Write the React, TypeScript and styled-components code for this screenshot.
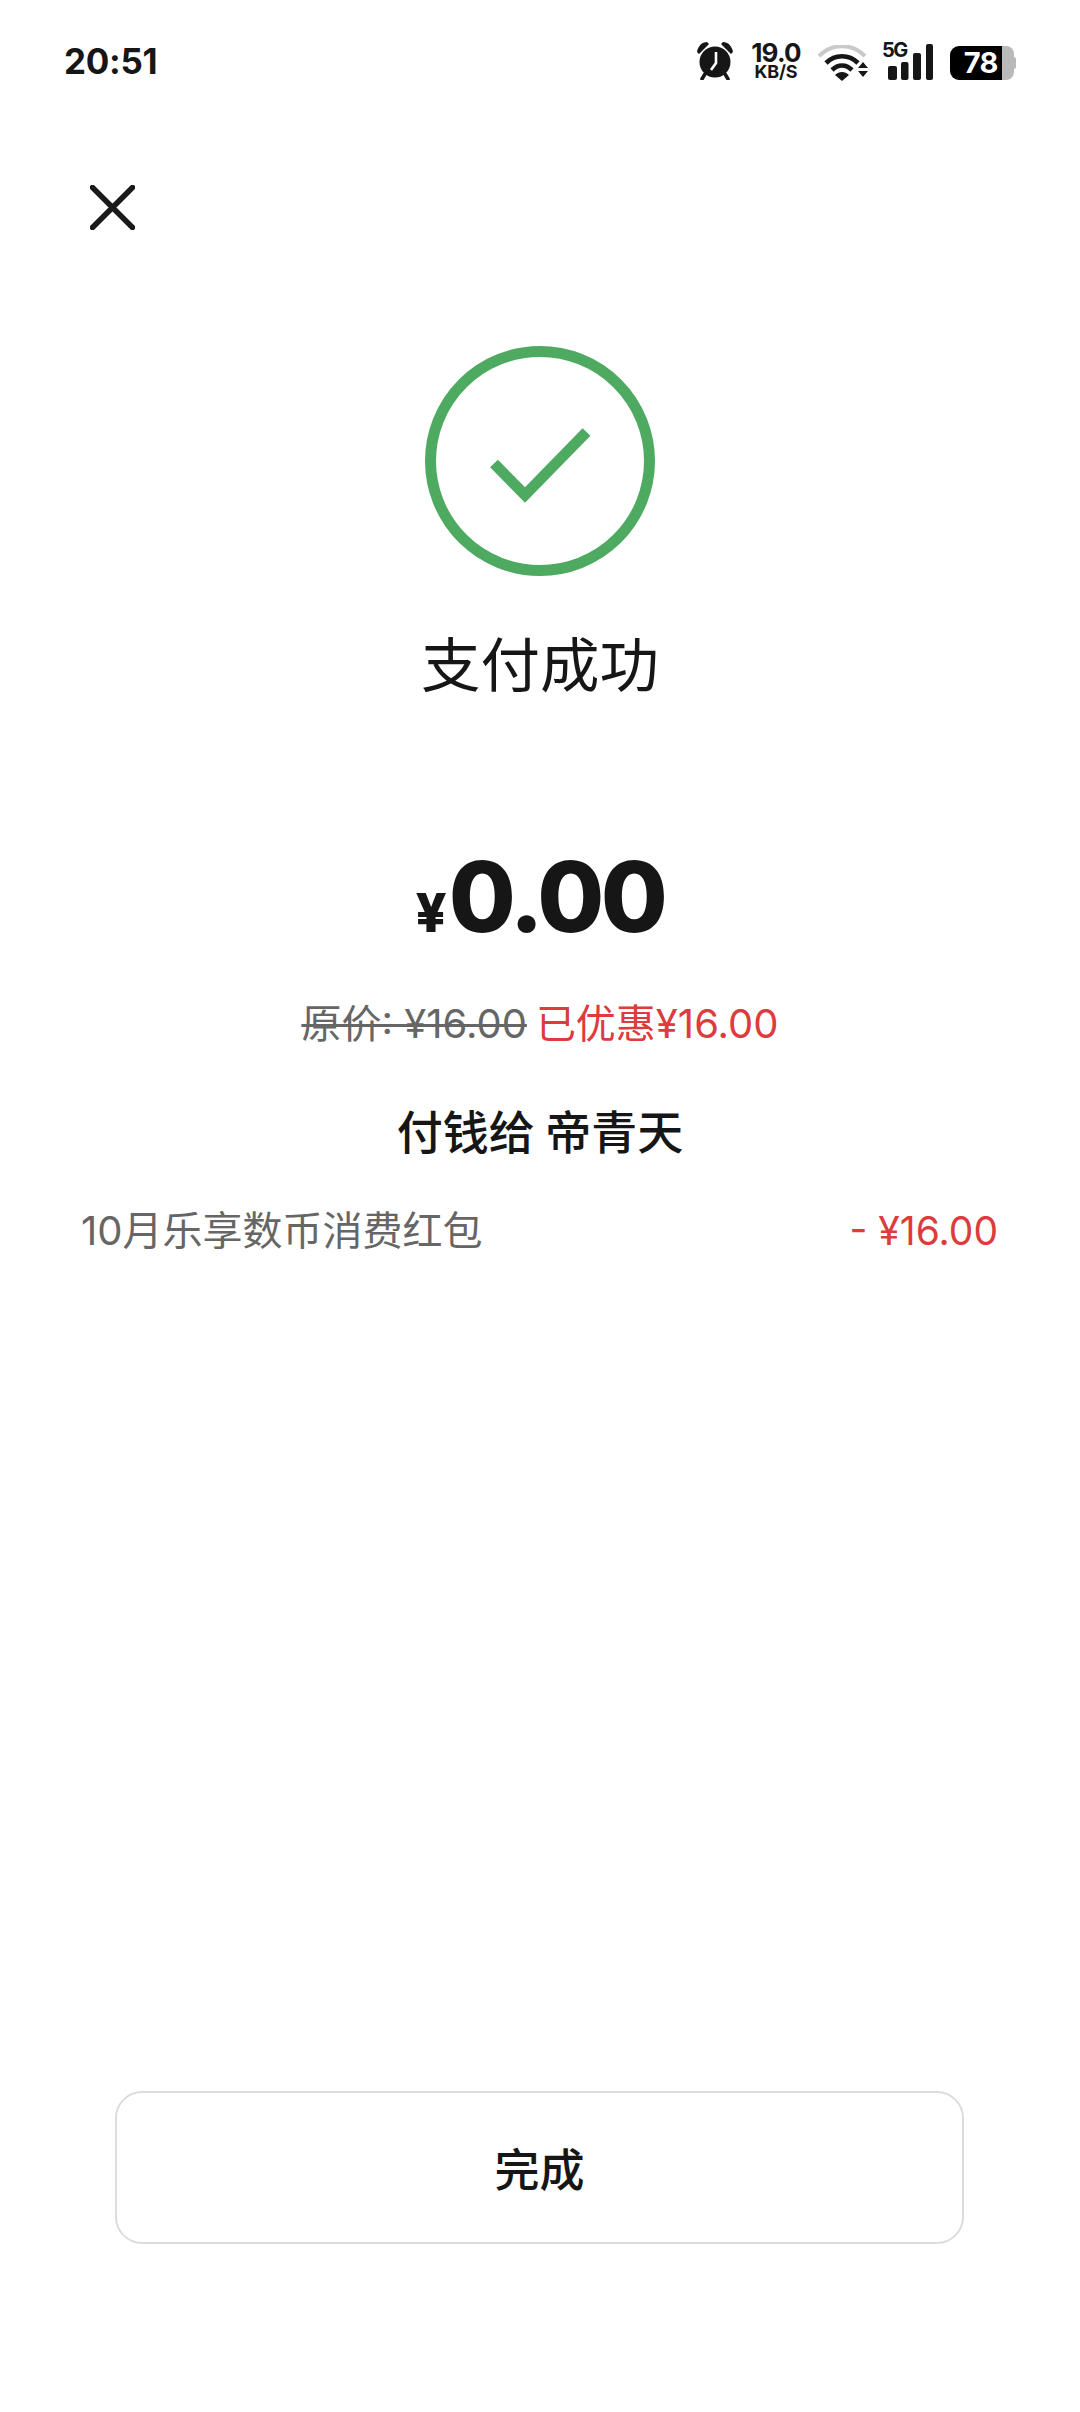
import React from "react";
import styled, { createGlobalStyle } from "styled-components";

const Global = createGlobalStyle`
  html, body { margin: 0; padding: 0; background: #fff; }
  body { font-family: Inter, "Noto Sans CJK SC", sans-serif; }
`;

const Page = styled.div`
  width: 1080px;
  height: 2412px;
  background: #fff;
  color: #161616;
  display: flex;
  flex-direction: column;
  overflow: hidden;
`;

const StatusBar = styled.div`
  height: 122px;
  padding: 0 64px 0 64px;
  display: flex;
  align-items: center;
  justify-content: space-between;
`;

const Time = styled.span`
  font-size: 35px;
  font-weight: 700;
  letter-spacing: -0.3px;
  line-height: 1;
`;

const StatusIcons = styled.div`
  display: flex;
  align-items: center;
  height: 40px;
`;

const Speed = styled.div`
  width: 54px;
  margin: 0 15px 0 16px;
  display: flex;
  flex-direction: column;
  align-items: center;
  font-weight: 700;
`;

const SpeedValue = styled.span`
  font-size: 26px;
  height: 22px;
  line-height: 22px;
  letter-spacing: -0.8px;
`;

const SpeedUnit = styled.span`
  font-size: 18px;
  height: 16px;
  line-height: 16px;
  letter-spacing: -0.2px;
`;

const WifiGlyph = styled.svg`
  margin-top: 3px;
`;

const Network = styled.div`
  position: relative;
  width: 51px;
  height: 36px;
  margin: 2px 17px 0 14px;
  display: flex;
  justify-content: flex-end;
`;

const NetworkLabel = styled.span`
  position: absolute;
  left: 0;
  top: -4px;
  font-size: 20px;
  line-height: 20px;
  font-weight: 700;
  letter-spacing: -1.5px;
`;

const Battery = styled.div`
  position: relative;
  width: 66px;
  height: 34px;
  margin-top: 3px;
  display: flex;
`;

const BatteryFill = styled.div`
  width: 52px;
  height: 34px;
  background: #000;
  color: #fff;
  border-radius: 9px 0 0 9px;
  font-size: 29px;
  font-weight: 700;
  line-height: 34px;
  text-align: right;
  padding-right: 4px;
  box-sizing: border-box;
  letter-spacing: -0.5px;
`;

const BatteryRest = styled.div`
  width: 12px;
  height: 34px;
  background: #b9b9b9;
  border-radius: 0 8px 8px 0;
`;

const BatteryNub = styled.div`
  width: 2px;
  height: 12px;
  margin-top: 11px;
  background: #b9b9b9;
  border-radius: 0 2px 2px 0;
`;

const CloseButton = styled.div`
  width: 45px;
  height: 45px;
  margin: 63px 0 0 90px;
`;

const Hero = styled.div`
  margin-top: 116px;
  display: flex;
  flex-direction: column;
  align-items: center;
`;

const Title = styled.h1`
  margin: 42px 0 0;
  font-size: 59.5px;
  line-height: 86px;
  font-weight: 400;
  letter-spacing: 0;
  font-family: "Noto Sans CJK SC", sans-serif;
`;

const Amount = styled.div`
  margin-top: 133px;
  display: flex;
  justify-content: center;
  align-items: baseline;
  height: 120px;
  line-height: 120px;
  font-weight: 800;
`;

const Currency = styled.span`
  font-size: 54px;
  margin-right: 2px;
`;

const AmountValue = styled.span`
  font-size: 97px;
  letter-spacing: -3.5px;
`;

const PriceLine = styled.div`
  margin-top: 39px;
  display: flex;
  justify-content: center;
  gap: 9px;
  font-size: 40px;
  line-height: 56px;
`;

const Original = styled.span`
  color: #666;
  text-decoration: line-through;
  text-decoration-thickness: 3px;
`;

const Discount = styled.span`
  color: #dd3b3e;
`;

const Payee = styled.div`
  margin-top: 45px;
  text-align: center;
  font-size: 46px;
  line-height: 64px;
  font-weight: 500;
  font-family: "Noto Sans CJK SC", sans-serif;
`;

const DetailRow = styled.div`
  margin-top: 40px;
  padding: 0 82px 0 81px;
  display: flex;
  justify-content: space-between;
  align-items: center;
  font-size: 40px;
  line-height: 60px;
`;

const DetailName = styled.span`
  color: #666;
`;

const DetailValue = styled.span`
  color: #dd3b3e;
  font-size: 39px;
`;

const Spacer = styled.div`
  flex: 1;
`;

const DoneButton = styled.div`
  width: 849px;
  height: 153px;
  margin: 0 0 168px 115px;
  box-sizing: border-box;
  border: 2px solid #dcdcdc;
  border-radius: 27px;
  display: flex;
  align-items: center;
  justify-content: center;
  font-size: 45px;
  font-family: "Noto Sans CJK SC", sans-serif;
  font-weight: 500;
`;

const Alarm = () => (
  <svg width="36" height="38" viewBox="0 0 36 38" aria-hidden="true">
    <path d="M0 10C1 4 5 0 10 0L12 2 2 12Z M36 10C35 4 31 0 26 0L24 2 34 12Z" fill="#161616" />
    <circle cx="18" cy="20" r="15.5" fill="#161616" />
    <path d="M8 32 5 37M28 32 31 37" stroke="#161616" strokeWidth="3.5" strokeLinecap="round" />
    <path d="M19 10V21L14 28" fill="none" stroke="#fff" strokeWidth="2.6" />
  </svg>
);

const Wifi = () => (
  <WifiGlyph width="50" height="36" viewBox="0 0 50 36" aria-hidden="true">
    <path d="M1 11C14-2 34-2 47 11" fill="none" stroke="#c9c9c9" strokeWidth="4" />
    <path d="M8 18C17 9 31 9 40 18" fill="none" stroke="#161616" strokeWidth="4.6" />
    <path d="M14 25C20 19 28 19 34 25" fill="none" stroke="#161616" strokeWidth="4.6" />
    <path d="M17 30C21 26 27 26 31 30L24 36Z" fill="#161616" />
    <path d="M45 17 50 23H40ZM40 26H50L45 32Z" fill="#161616" />
  </WifiGlyph>
);

const Bars = () => (
  <svg width="45" height="36" viewBox="0 0 45 36" aria-hidden="true">
    <rect x="0" y="22" width="9" height="14" rx="2" fill="#161616" />
    <rect x="13" y="18" width="7.5" height="18" rx="2" fill="#161616" />
    <rect x="25" y="9" width="8" height="27" rx="2" fill="#161616" />
    <rect x="38" y="0" width="7" height="36" rx="2" fill="#161616" />
  </svg>
);

const CloseIcon = () => (
  <svg width="45" height="45" viewBox="0 0 45 45" aria-hidden="true">
    <path d="M2.5 2.5 42.5 42.5M42.5 2.5 2.5 42.5" fill="none" stroke="#1a1a1a" strokeWidth="5.5" strokeLinecap="round" />
  </svg>
);

const SuccessIcon = () => (
  <svg width="230" height="230" viewBox="0 0 230 230" aria-hidden="true">
    <circle cx="115" cy="115" r="109.5" fill="none" stroke="#4eaa60" strokeWidth="11" />
    <path d="M69 117.5 100 149 161.5 86" fill="none" stroke="#4eaa60" strokeWidth="11" />
  </svg>
);

export default function App() {
  return (
    <Page>
      <Global />
      <StatusBar>
        <Time>20:51</Time>
        <StatusIcons>
          <Alarm />
          <Speed>
            <SpeedValue>19.0</SpeedValue>
            <SpeedUnit>KB/S</SpeedUnit>
          </Speed>
          <Wifi />
          <Network>
            <NetworkLabel>5G</NetworkLabel>
            <Bars />
          </Network>
          <Battery>
            <BatteryFill>78</BatteryFill>
            <BatteryRest />
            <BatteryNub />
          </Battery>
        </StatusIcons>
      </StatusBar>
      <CloseButton>
        <CloseIcon />
      </CloseButton>
      <Hero>
        <SuccessIcon />
        <Title>支付成功</Title>
      </Hero>
      <Amount>
        <Currency>¥</Currency>
        <AmountValue>0.00</AmountValue>
      </Amount>
      <PriceLine>
        <Original>原价: ¥16.00</Original>
        <Discount>已优惠¥16.00</Discount>
      </PriceLine>
      <Payee>付钱给 帝青天</Payee>
      <DetailRow>
        <DetailName>10月乐享数币消费红包</DetailName>
        <DetailValue>- ¥16.00</DetailValue>
      </DetailRow>
      <Spacer />
      <DoneButton>完成</DoneButton>
    </Page>
  );
}
